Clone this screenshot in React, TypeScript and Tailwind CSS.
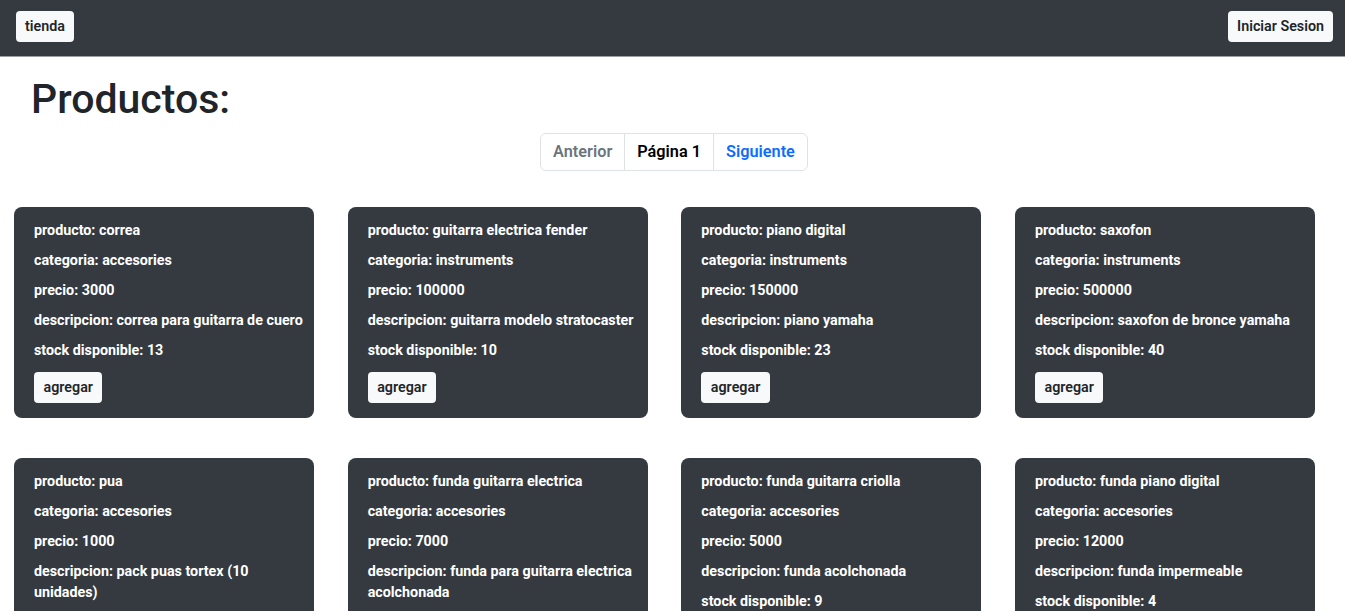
import React from "react";

const products = [
  { p: "correa", c: "accesories", pr: "3000", d: "correa para guitarra de cuero", s: "13" },
  { p: "guitarra electrica fender", c: "instruments", pr: "100000", d: "guitarra modelo stratocaster", s: "10" },
  { p: "piano digital", c: "instruments", pr: "150000", d: "piano yamaha", s: "23" },
  { p: "saxofon", c: "instruments", pr: "500000", d: "saxofon de bronce yamaha", s: "40" },
  { p: "pua", c: "accesories", pr: "1000", d: "pack puas tortex (10 unidades)", s: "50" },
  { p: "funda guitarra electrica", c: "accesories", pr: "7000", d: "funda para guitarra electrica acolchonada", s: "8" },
  { p: "funda guitarra criolla", c: "accesories", pr: "5000", d: "funda acolchonada", s: "9" },
  { p: "funda piano digital", c: "accesories", pr: "12000", d: "funda impermeable", s: "4" },
];

function Card({ item }: { item: (typeof products)[number] }) {
  return (
    <div className="w-[300px] bg-[#343a40] rounded-[8px] text-white pl-[20px] pr-[8px] pt-[13px] pb-[15px]">
      <div className="flex flex-col gap-[9px] text-[14.3px] leading-[21px] font-bold">
        <p>producto: {item.p}</p>
        <p>categoria: {item.c}</p>
        <p>precio: {item.pr}</p>
        <p>descripcion: {item.d}</p>
        <p>stock disponible: {item.s}</p>
      </div>
      <button className="mt-[11px] bg-[#f8f9fa] text-[#212529] text-[14.3px] leading-[21px] font-semibold rounded-[4px] px-[9.5px] py-[5px]">
        agregar
      </button>
    </div>
  );
}

export default function App() {
  return (
    <div className="min-h-[611px] bg-white" style={{ fontFamily: "Roboto, 'Noto Sans', sans-serif" }}>
      <nav className="h-[57px] bg-[#343a40] border-b border-[#9a9da1] flex items-start justify-between px-[12px] pt-[11px]">
        <button className="ml-[4px] bg-[#f8f9fa] text-[#212529] text-[14.3px] leading-[21px] font-semibold rounded-[4px] px-[9px] py-[5px]">
          tienda
        </button>
        <button className="bg-[#f8f9fa] text-[#212529] text-[14.3px] leading-[21px] font-semibold rounded-[4px] px-[9px] py-[5px]">
          Iniciar Sesion
        </button>
      </nav>
      <h1 className="mt-[18px] pl-[31px] text-[41px] leading-[48px] font-medium text-[#212529]">Productos:</h1>
      <div className="mt-[10px] flex justify-center">
        <div className="ml-[3px] flex border border-[#dee2e6] rounded-[6px] text-[16.3px] leading-[24px] font-semibold">
          <span className="px-[12px] py-[6px] text-[#6c757d]">Anterior</span>
          <span className="px-[12px] py-[6px] text-black border-l border-[#dee2e6]">Página 1</span>
          <span className="px-[12px] py-[6px] text-[#0d6efd] border-l border-[#dee2e6]">Siguiente</span>
        </div>
      </div>
      <div className="mt-[36px] pl-[14px] grid grid-cols-[repeat(4,300px)] gap-x-[33.67px] gap-y-[40px]">
        {products.map((it, i) => (
          <Card key={i} item={it} />
        ))}
      </div>
    </div>
  );
}
